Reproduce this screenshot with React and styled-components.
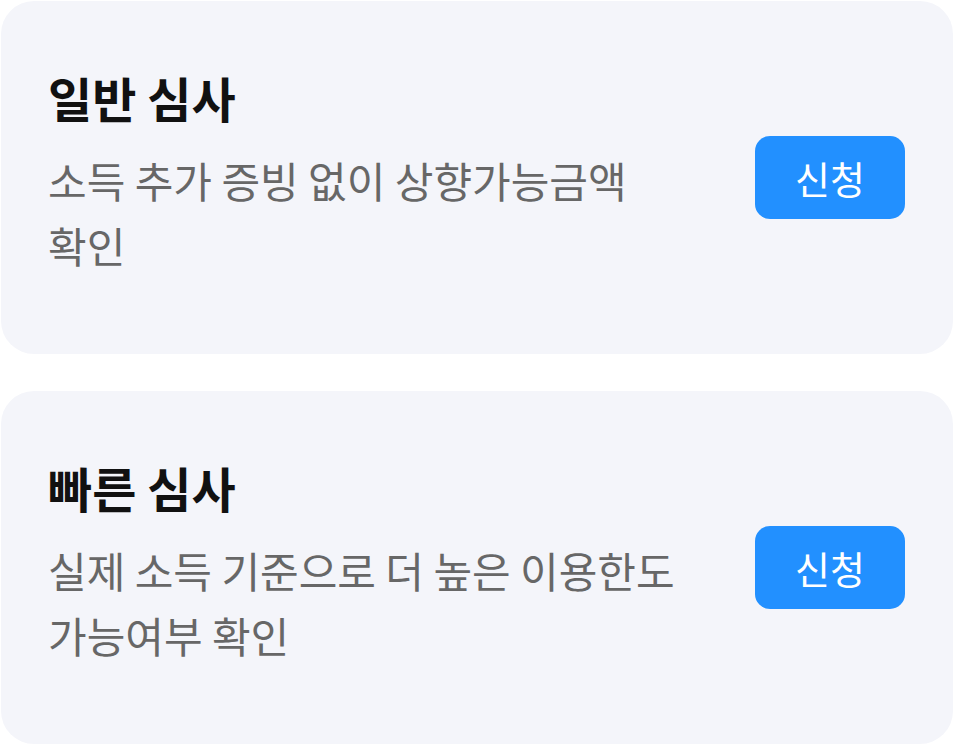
import React from 'react'
import styled, { createGlobalStyle } from 'styled-components'

const GlobalStyle = createGlobalStyle`
    html, body {
        margin: 0;
        padding: 0;
        background: #ffffff;
        font-family: "Noto Sans CJK KR", "Noto Sans", sans-serif;
    }
`

const Page = styled.div`
    display: flex;
    flex-direction: column;
    gap: 37px;
    padding: 1px 0 0 1px;
`

const Card = styled.div`
    display: flex;
    align-items: center;
    justify-content: space-between;
    height: 353px;
    box-sizing: border-box;
    padding: 0 48px 0 47px;
    background: #f4f5fa;
    border-radius: 33px;
`

const Text = styled.div`
    width: 640px;
    margin-top: -11px;
`

const Title = styled.h2`
    margin: 0 0 20px;
    font-size: 48px;
    line-height: 60px;
    font-weight: 700;
    color: #111111;
`

const Desc = styled.p`
    margin: 0;
    font-size: 42px;
    line-height: 65px;
    font-weight: 400;
    color: #676767;
    word-break: keep-all;
`

const Button = styled.button`
    flex-shrink: 0;
    width: 150px;
    height: 83px;
    border: none;
    border-radius: 15px;
    background: #2290ff;
    color: #ffffff;
    font-family: inherit;
    font-size: 38px;
    font-weight: 400;
    cursor: pointer;
`

const items = [
    { title: '일반 심사', desc: '소득 추가 증빙 없이 상향가능금액 확인' },
    { title: '빠른 심사', desc: '실제 소득 기준으로 더 높은 이용한도 가능여부 확인' },
]

const App = () => {
    return <>
        <GlobalStyle />
        <Page>
            {items.map(item =>
                <Card key={item.title}>
                    <Text>
                        <Title>{item.title}</Title>
                        <Desc>{item.desc}</Desc>
                    </Text>
                    <Button>신청</Button>
                </Card>
            )}
        </Page>
    </>
}

export default App
